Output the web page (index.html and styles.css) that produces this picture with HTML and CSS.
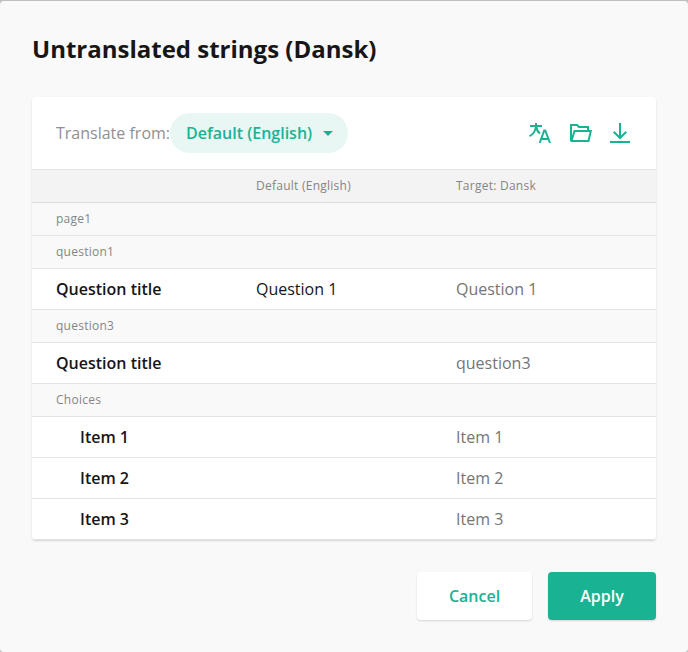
FILE: index.html
```html
<!DOCTYPE html>
<html lang="en">
<head>
<meta charset="utf-8">
<title>Untranslated strings (Dansk)</title>
<link rel="stylesheet" href="styles.css">
</head>
<body>
<main class="dialog">
  <h1 class="title">Untranslated strings (Dansk)</h1>
  <section class="card">
    <div class="toolbar">
      <span class="label">Translate from:</span>
      <button class="select">Default (English)<svg width="10" height="5" viewBox="0 0 10 5"><path d="M0 0H10L5 5Z"/></svg></button>
      <div class="actions">
        <svg class="icon" viewBox="0 0 24 24"><path d="M2 5H14M8 2V5C7.500 10 5 13.500 1.500 15.200M8 5C8.500 8.500 9.700 10.800 12 12.500M11.700 22L16.200 9.500H17.200L22 22M13.500 18H20.500"/></svg>
        <svg class="icon" viewBox="0 0 24 24"><path d="M3 20.500V4H9L11 6H20V10M3.500 20L6.500 10H22.800L20.500 20H3"/></svg>
        <svg class="icon" viewBox="0 0 24 24"><path d="M12 2V17M5.700 10.700L12 17L18.300 10.700M2 21H22"/></svg>
      </div>
    </div>
    <div class="row head"><span></span><span>Default (English)</span><span>Target: Dansk</span></div>
    <div class="row group"><span>page1</span></div>
    <div class="row group"><span>question1</span></div>
    <div class="row"><b>Question title</b><span>Question 1</span><span class="muted">Question 1</span></div>
    <div class="row group"><span>question3</span></div>
    <div class="row"><b>Question title</b><span></span><span class="muted">question3</span></div>
    <div class="row group"><span>Choices</span></div>
    <div class="row"><b class="nested">Item 1</b><span></span><span class="muted">Item 1</span></div>
    <div class="row"><b class="nested">Item 2</b><span></span><span class="muted">Item 2</span></div>
    <div class="row"><b class="nested">Item 3</b><span></span><span class="muted">Item 3</span></div>
  </section>
  <footer class="footer">
    <button class="button">Cancel</button>
    <button class="button primary">Apply</button>
  </footer>
</main>
</body>
</html>
```
FILE: styles.css
```css
* { box-sizing: border-box; }
body {
  margin: 0;
  padding-top: 1px;
  height: 652px;
  background: #bfbfbf;
  color: #161616;
  font: 16px/24px "Open Sans", sans-serif;
}
button { border: 0; margin: 0; font: inherit; font-weight: 600; }
.dialog {
  height: 651px;
  padding: 32px;
  border-radius: 4px;
  background: #f9f9f9;
}
.title {
  margin: 0 0 32px;
  font-size: 24px;
  line-height: 32px;
  font-weight: 700;
}
.card {
  height: 443px;
  border-radius: 4px;
  background: #fff;
  box-shadow: 0 1px 2px rgba(0, 0, 0, .15);
  overflow: hidden;
}
.toolbar {
  display: flex;
  align-items: center;
  height: 73px;
  padding: 0 24px;
  border-bottom: 1px solid #e3e3e3;
}
.label { color: #909090; }
.select {
  display: flex;
  align-items: center;
  gap: 11px;
  width: 178px;
  height: 40px;
  padding: 0 0 0 16px;
  border-radius: 20px;
  background: #e8f7f4;
  color: #19b394;
}
.select svg { fill: #19b394; }
.actions { display: flex; gap: 16px; margin-left: auto; }
.icon { width: 24px; height: 24px; fill: none; stroke: #19b394; stroke-width: 2; }
.row {
  display: grid;
  grid-template-columns: 200px 200px 1fr;
  align-items: center;
  height: 41px;
  padding: 0 24px;
  border-bottom: 1px solid #e3e3e3;
}
.row b { font-weight: 600; }
.row .nested { padding-left: 24px; }
.muted { color: #757575; }
.head, .group {
  height: 33px;
  background: #f9f9f9;
  color: #858585;
  font-size: 12px;
  line-height: 16px;
  font-weight: 400;
  letter-spacing: .25px;
}
.head { background: #f3f3f3; border-bottom-color: #dcdcdc; }
.footer {
  display: flex;
  justify-content: flex-end;
  gap: 16px;
  margin-top: 32px;
}
.button {
  width: 115px;
  height: 48px;
  border-radius: 4px;
  background: #fff;
  color: #19b394;
  box-shadow: 0 1px 2px rgba(0, 0, 0, .15);
}
.primary { width: 108px; background: #19b394; color: #fff; }
```
